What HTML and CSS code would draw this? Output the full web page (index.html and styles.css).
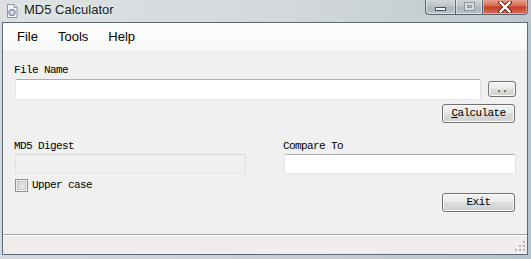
FILE: index.html
```html
<!DOCTYPE html>
<html>
<head>
<meta charset="utf-8">
<link rel="stylesheet" href="styles.css">
</head>
<body>
<div class="window">
  <div class="titlebar">
    <svg class="app-icon" width="16" height="16" viewBox="0 0 16 16">
      <path d="M3.5 1.5h6.5l3 3v10h-9.5z" fill="#f8f9fb" stroke="#8d96a0"/>
      <path d="M10 1.5v3h3" fill="#dfe3e8" stroke="#8d96a0"/>
      <circle cx="8" cy="9.5" r="3.3" fill="#b8bed8" stroke="#7c84a8"/>
      <circle cx="8" cy="9.5" r="1.2" fill="#eef0f8"/>
    </svg>
    <span class="title">MD5 Calculator</span>
    <div class="caption">
      <div class="cap-btn cap-min"><span class="min-glyph"></span></div>
      <div class="cap-btn cap-max"><span class="max-glyph"></span></div>
      <div class="cap-btn cap-close">
        <svg width="14" height="12" viewBox="0 0 14 12">
          <path d="M2.5 1.5l9 9M11.5 1.5l-9 9" stroke="#5a1a10" stroke-width="4.2" stroke-linecap="square"/>
          <path d="M2.5 1.5l9 9M11.5 1.5l-9 9" stroke="#ffffff" stroke-width="2.4" stroke-linecap="square"/>
        </svg>
      </div>
    </div>
  </div>
  <div class="client">
    <div class="menubar">
      <span class="menu-item">File</span>
      <span class="menu-item">Tools</span>
      <span class="menu-item">Help</span>
    </div>
    <div class="form">
      <div class="label first">File Name</div>
      <div class="file-row">
        <div class="textbox file-box"></div>
        <div class="button browse">..</div>
      </div>
      <div class="button action calc"><span class="ul">C</span>alculate</div>
      <div class="columns">
        <div class="col">
          <div class="label">MD5 Digest</div>
          <div class="textbox disabled"></div>
          <div class="check-row">
            <span class="checkbox"></span>
            <span class="check-label">Upper case</span>
          </div>
        </div>
        <div class="col">
          <div class="label">Compare To</div>
          <div class="textbox"></div>
        </div>
      </div>
      <div class="button action exit">Exit</div>
    </div>
    <div class="statusbar">
      <svg class="grip" width="11" height="11" viewBox="0 0 11 11">
        <g fill="#b4b4b4">
          <rect x="8" y="0" width="2" height="2"/>
          <rect x="4" y="4" width="2" height="2"/>
          <rect x="8" y="4" width="2" height="2"/>
          <rect x="0" y="8" width="2" height="2"/>
          <rect x="4" y="8" width="2" height="2"/>
          <rect x="8" y="8" width="2" height="2"/>
        </g>
      </svg>
    </div>
  </div>
</div>
</body>
</html>
```
FILE: styles.css
```css
* { box-sizing: border-box; }
html, body { margin: 0; padding: 0; }
body {
  width: 531px;
  height: 259px;
  overflow: hidden;
  background: #c3ccd4;
}
.window {
  width: 531px;
  height: 259px;
  display: flex;
  flex-direction: column;
  background: linear-gradient(90deg, #d3d9de 0%, #c6ced4 60%, #b7c3cc 100%);
}
.titlebar {
  height: 22px;
  flex: none;
  display: flex;
  align-items: flex-start;
  position: relative;
  background: linear-gradient(90deg, #dde1e4 0%, #d2d8dc 55%, #bec8cc 100%);
}
.app-icon {
  margin: 3px 0 0 4px;
  flex: none;
}
.title {
  margin: 2px 0 0 4px;
  font-family: "Liberation Sans", Arial, sans-serif;
  font-size: 13px;
  line-height: 16px;
  color: #1a1a1a;
  text-shadow: 0 0 6px #f4f6f7;
}
.caption {
  position: absolute;
  top: -1px;
  right: 3px;
  display: flex;
  height: 16px;
}
.cap-btn {
  height: 16px;
  border: 1px solid #5b6770;
  border-top: none;
  display: flex;
  align-items: center;
  justify-content: center;
  position: relative;
}
.cap-min {
  width: 30px;
  border-radius: 0 0 0 4px;
  border-right: none;
  background: linear-gradient(#d3d9dc, #b9c2c6 50%, #a9b3b8 51%, #b8c3c8);
  box-shadow: inset 0 0 0 1px rgba(255,255,255,0.45);
}
.cap-max {
  width: 27px;
  border-right: none;
  background: linear-gradient(#d3d9dc, #b9c2c6 50%, #a9b3b8 51%, #b8c3c8);
  box-shadow: inset 0 0 0 1px rgba(255,255,255,0.45);
}
.cap-close {
  width: 46px;
  border-radius: 0 0 4px 0;
  background: linear-gradient(#e8a897, #d86a52 45%, #c73f27 55%, #d4735c);
  box-shadow: inset 0 0 0 1px rgba(255,220,210,0.5);
}
.cap-close svg { margin-top: 1px; }
.min-glyph {
  width: 11px;
  height: 4px;
  margin-top: 5px;
  background: #f4f6f7;
  border: 1px solid #46525a;
}
.max-glyph {
  width: 11px;
  height: 9px;
  border: 1px solid #8a949a;
  box-shadow: inset 0 0 0 2px #d8dde0, inset 0 0 0 3px #8a949a;
}
.client {
  flex: 1;
  margin: 0 3px 4px 2px;
  border: 1px solid #5e6a73;
  display: flex;
  flex-direction: column;
  background: #f0f0f0;
}
.menubar {
  height: 27px;
  flex: none;
  display: flex;
  padding-left: 4px;
  background: linear-gradient(#fdfdfd, #f8f9fa);
}
.menu-item {
  padding: 0 10px;
  font-family: "Liberation Sans", Arial, sans-serif;
  font-size: 13px;
  line-height: 27px;
  color: #000;
}
.form {
  flex: 1;
  display: flex;
  flex-direction: column;
  padding: 0 11px 0 12px;
}
.label {
  font-family: "Liberation Mono", "Courier New", monospace;
  font-size: 11px;
  letter-spacing: -0.6px;
  line-height: 13px;
  height: 13px;
  color: #000;
  margin-left: -1px;
}
.label.first { margin-top: 14px; }
.file-row {
  display: flex;
  gap: 7px;
  margin-top: 2px;
}
.textbox {
  height: 21px;
  background: #fff;
  border: 1px solid;
  border-color: #abadb3 #dbdfe6 #e3e9ef #e2e3ea;
  border-radius: 2px;
}
.file-box { flex: 1; }
.textbox.disabled {
  background: #f0f0f0;
  border-color: #d5d5d5 #e0e0e0 #e6e6e6 #e0e0e0;
}
.button {
  border: 1px solid #707070;
  border-radius: 3px;
  background: linear-gradient(#f2f2f2 0%, #ebebeb 45%, #dddddd 50%, #cfcfcf 100%);
  box-shadow: inset 0 0 0 1px #fcfcfc;
  font-family: "Liberation Mono", "Courier New", monospace;
  font-size: 11px;
  letter-spacing: -0.6px;
  color: #000;
  text-align: center;
}
.browse {
  width: 28px;
  height: 16px;
  margin-top: 2px;
  line-height: 16px;
  font-size: 10px;
  letter-spacing: 0;
}
.action {
  width: 73px;
  height: 19px;
  line-height: 17px;
  align-self: flex-end;
}
.calc { margin-top: 4px; margin-right: 1px; }
.ul { text-decoration: underline; }
.columns {
  display: grid;
  grid-template-columns: 231px 232px;
  justify-content: space-between;
  margin-top: 17px;
}
.col { display: flex; flex-direction: column; }
.col .label { margin-bottom: 1px; }
.col .textbox { height: 20px; }
.check-row {
  display: flex;
  align-items: center;
  gap: 4px;
  margin-top: 5px;
  height: 13px;
}
.checkbox {
  width: 13px;
  height: 13px;
  border: 1px solid #8f8f8f;
  background: linear-gradient(135deg, #cbcbcb, #f4f4f4);
  box-shadow: inset 0 0 0 1px #f4f4f4, inset 0 0 0 2px #c4c4c4;
}
.check-label {
  font-family: "Liberation Mono", "Courier New", monospace;
  font-size: 11px;
  letter-spacing: -0.6px;
  line-height: 13px;
}
.exit { margin-top: 1px; margin-right: 1px; }
.statusbar {
  height: 20px;
  flex: none;
  border-top: 1px solid #a3a3a3;
  box-shadow: inset 0 1px #ffffff;
  background: #f2eded;
  display: flex;
  justify-content: flex-end;
  align-items: flex-end;
  padding: 0 1px 2px 0;
}
```
